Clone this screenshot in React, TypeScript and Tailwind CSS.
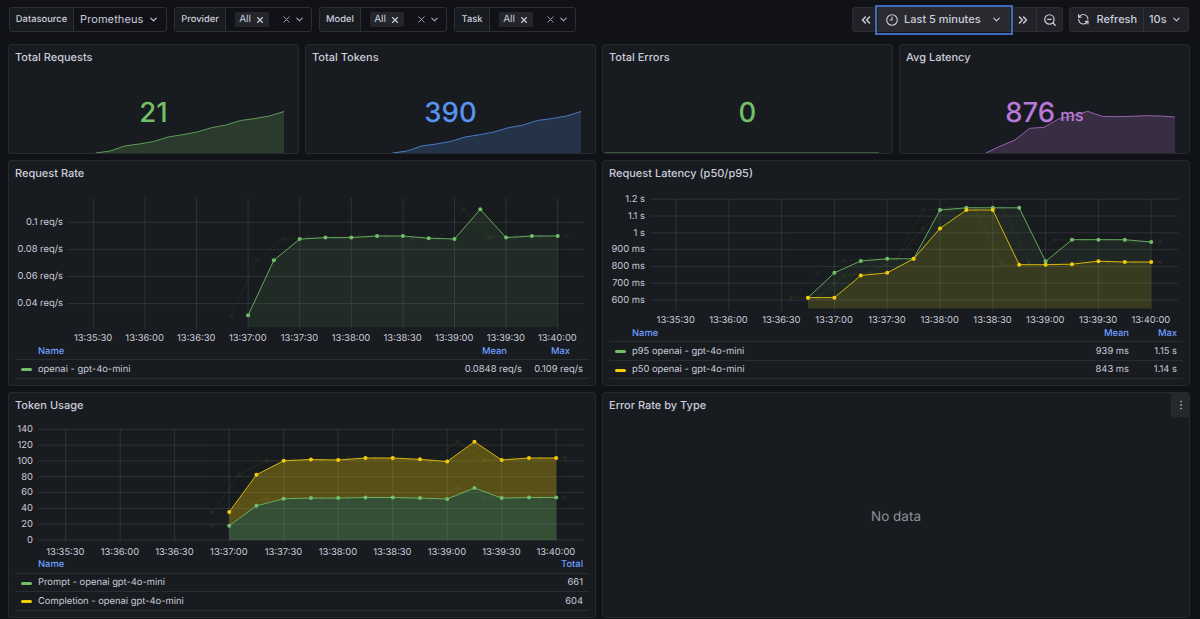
import { ChevronDown, ChevronsLeft, ChevronsRight, MoreVertical, RefreshCcw, X, ZoomOut } from "lucide-react";
import type { ReactNode } from "react";

const GREEN = "#73bf69";
const YELLOW = "#f2cc0c";

const TIMES = ["13:35:30", "13:36:00", "13:36:30", "13:37:00", "13:37:30", "13:38:00", "13:38:30", "13:39:00", "13:39:30", "13:40:00"];

type Series = { color: string; fill: number; values: number[]; };

type ChartProps = {
    height: number;
    left: number;
    firstTick: number;
    tickStep: number;
    bottom: number;
    labelY: number;
    // Two reference points of the value axis: [value, y]
    scale: [[number, number], [number, number]];
    ticks: { value: number; label: string }[];
    series: Series[];
    stacked?: boolean;
    top: number;
};

const TimeChart = ({ height, left, firstTick, tickStep, bottom, labelY, scale, ticks, series, stacked, top }: ChartProps) => {
    const [[v0, y0], [v1, y1]] = scale;
    const y = (value: number) => y0 + ((value - v0) / (v1 - v0)) * (y1 - y0);
    const lastX = firstTick + tickStep * 9;
    const toPoints = (values: number[]) => values.map((v, i) => [lastX - (values.length - 1 - i) * (tickStep / 2), y(v)]);
    const join = (points: number[][]) => points.map(([px, py]) => `${px.toFixed(1)},${py.toFixed(1)}`).join(" ");

    return (
        <svg width="586" height={height} viewBox={`0 0 586 ${height}`} className="block shrink-0 overflow-visible font-[Inter,sans-serif] text-[9.4px]">
            {/* Grid */}
            <g stroke="#ccccdc" strokeOpacity="0.12">
                {ticks.map((t) => <line key={t.label} x1={left} x2="575" y1={y(t.value)} y2={y(t.value)} />)}
                {TIMES.map((t, i) => <line key={t} x1={firstTick + i * tickStep} x2={firstTick + i * tickStep} y1={top} y2={bottom + 2} />)}
            </g>

            {/* Axis labels */}
            <g fill="#ccccdc">
                {ticks.map((t) => <text key={t.label} x={left - 5} y={y(t.value) + 2.8} textAnchor="end">{t.label}</text>)}
                {TIMES.map((t, i) => <text key={t} x={firstTick + i * tickStep - 0.3} y={labelY} textAnchor="middle">{t}</text>)}
            </g>

            <g opacity="0.07">
                {series.map((s) => {
                    const shifted = toPoints(s.values).map(([px, py]) => [px - 17, py]);
                    const trail = [...shifted, [lastX + 9, shifted[shifted.length - 1][1]]];
                    return (
                        <g key={s.color}>
                            <polyline points={join(trail)} fill="none" stroke={s.color} />
                            {trail.map(([px, py]) => <circle key={px} cx={px} cy={py} r="2" fill={s.color} />)}
                        </g>
                    );
                })}
            </g>

            {/* Areas */}
            {series.map((s, i) => {
                const points = toPoints(s.values);
                const below = stacked && series[i + 1]
                    ? toPoints(series[i + 1].values).reverse()
                    : [[lastX, bottom], [points[0][0], bottom]];
                return <polygon key={s.color} points={join([...points, ...below])} fill={s.color} fillOpacity={s.fill} />;
            })}

            {/* Lines and points */}
            {series.map((s) => {
                const points = toPoints(s.values);
                return (
                    <g key={s.color}>
                        <polyline points={join(points)} fill="none" stroke={s.color} strokeOpacity="0.85" />
                        {points.map(([px, py]) => <circle key={px} cx={px} cy={py} r="2" fill={s.color} />)}
                    </g>
                );
            })}
        </svg>
    );
};

const Panel = ({ title, className = "", children }: { title: string; className?: string; children?: ReactNode }) => (
    <section className={`relative flex flex-col overflow-hidden rounded-[3px] border border-[#26292e] bg-[#181b1f] ${className}`}>
        <h2 className="h-[29px] shrink-0 pl-1.5 text-[11px] leading-[24px] font-medium text-[#ccccdc]">{title}</h2>
        {children}
    </section>
);

type StatProps = { title: string; value: string; unit?: string; color: string; textClass: string; points: string; end: number };

const StatPanel = ({ title, value, unit, color, textClass, points, end }: StatProps) => (
    <Panel title={title} className="h-[110px]">
        <div className={`flex h-[77px] items-center justify-center text-[27.5px] leading-none font-medium ${textClass}`}>
            <span>{value}</span>
            {unit && <span className="mt-[6px] ml-[5px] text-[16.5px]">{unit}</span>}
        </div>
        {/* Sparkline */}
        <svg width="290" height="44" viewBox="0 0 290 44" className="absolute -bottom-px left-0">
            <polygon points={`${points} ${end},44 ${points.split(",")[0]},44`} fill={color} fillOpacity="0.2" />
            <polyline points={points} fill="none" stroke={color} strokeOpacity="0.75" />
        </svg>
    </Panel>
);

type LegendProps = { columns: { label: string; width: string; inset?: string }[]; rows: { color: string; name: string; values: string[] }[] };

const Legend = ({ columns, rows }: LegendProps) => (
    <div className="ml-1.5 w-[574px] text-[9.4px] leading-none text-[#ccccdc]">
        <div className="flex h-[18.5px] items-center border-b border-[#292c31] pt-[2px] pr-[6px] font-medium text-[#6e9fff]">
            <span className="flex-1 pl-[23px]">Name</span>
            {columns.map((c) => <span key={c.label} className={`text-right ${c.width} ${c.inset ?? ""}`}>{c.label}</span>)}
        </div>
        {rows.map((row) => (
            <div key={row.name} className="flex h-[18.5px] items-center border-b border-[#292c31] pt-[1.5px] pr-[6px]">
                <span className="ml-1.5 h-[3px] w-[11px] rounded-full" style={{ backgroundColor: row.color }} />
                <span className="flex-1 pl-1.5">{row.name}</span>
                {row.values.map((v, i) => <span key={v} className={`text-right whitespace-nowrap ${columns[i].width}`}>{v}</span>)}
            </div>
        ))}
    </div>
);

const Variable = ({ label, className, labelClass }: { label: string; className: string; labelClass: string }) => (
    <div className={`flex h-[25px] items-center rounded-[3px] border border-[#2c2e34] ${className}`}>
        <span className={`flex h-full items-center justify-center border-r border-[#2c2e34] bg-[#181b1f] pt-px text-[9.4px] font-medium ${labelClass}`}>{label}</span>
        <span className="ml-[9px] flex h-[15px] w-[34px] items-center justify-center gap-[4px] rounded-[2px] bg-[#24262c] text-[10px]">
            <span>All</span> <X size={10} strokeWidth={2.6} />
        </span>
        <span className="mr-1.5 ml-auto flex items-center gap-[2px] text-[#a5a6b2]">
            <X size={11} strokeWidth={2} />
            <ChevronDown size={11} strokeWidth={2.4} />
        </span>
    </div>
);

const Toolbar = () => (
    <header className="flex h-[37px] pt-[7px] pl-[9px] text-[11px] text-[#ccccdc]">
        <div className="flex h-[25px] w-[158px] items-center rounded-[3px] border border-[#2c2e34]">
            <span className="flex h-full w-[64px] items-center justify-center border-r border-[#2c2e34] bg-[#181b1f] pt-px text-[9.4px] font-medium">Datasource</span>
            <span className="flex-1 pl-1.5 tracking-[0.1px]">Prometheus</span>
            <ChevronDown size={11} strokeWidth={2.4} className="mr-[7px]" />
        </div>
        <Variable label="Provider" className="ml-[7px] w-[138px]" labelClass="w-[51px]" />
        <Variable label="Model" className="ml-[7px] w-[128px]" labelClass="w-[41px]" />
        <Variable label="Task" className="ml-[7px] w-[122px]" labelClass="w-[35px]" />

        {/* Time range */}
        <div className="mr-1.5 ml-auto flex h-[25px] w-[211px] items-center rounded-[3px] border border-[#2b2d32] bg-[#202227] font-medium">
            <span className="flex w-[25px] justify-center"><ChevronsLeft size={14} strokeWidth={2.6} /></span>
            <button className="flex h-[24px] w-[132px] items-center bg-[#2a2b30] pl-2 outline-2 outline-offset-1 outline-[#3f6cba]">
                {/* Clock pointing at nine */}
                <svg width="12" height="12" viewBox="0 0 12 12" fill="none" stroke="currentColor" strokeWidth="1.1" strokeLinecap="round">
                    <circle cx="6" cy="6" r="5.3" />
                    <path d="M6 3v3H4" />
                </svg>
                <span className="pl-1.5">Last 5 minutes</span>
                <ChevronDown size={11} strokeWidth={2.4} className="mr-[8px] ml-auto" />
            </button>
            <span className="flex h-full w-[27px] items-center justify-center border-r border-[#303238]"><ChevronsRight size={14} strokeWidth={2.6} /></span>
            <span className="flex flex-1 justify-center"><ZoomOut size={14} strokeWidth={2.1} /></span>
        </div>

        {/* Refresh */}
        <div className="mr-[11px] flex h-[25px] w-[120px] items-center rounded-[3px] border border-[#2b2d32] bg-[#202227] font-medium">
            <span className="flex h-full w-[74px] items-center gap-[7px] border-r border-[#303238] pl-[7px]">
                <RefreshCcw size={12.5} strokeWidth={2.1} />Refresh
            </span>
            <span className="pl-[5px]">10s</span>
            <ChevronDown size={11} strokeWidth={2.4} className="ml-[4px]" />
        </div>
    </header>
);

const RISING = "86.5,43 101,41 115.5,36 130,34 144.5,31.5 159,27 173.5,24.7 188,22 202.5,17.7 217,15 231.5,10.5 246,8.5 260.5,6 275,1.5";

export default function App() {
    return (
        <div className="h-[619px] w-[1200px] overflow-hidden bg-[#111217] font-[Inter,sans-serif] text-[#ccccdc] [text-rendering:geometricPrecision]">
            <Toolbar />
            <main className="flex flex-col gap-1.5 pt-[7px] pr-[10px] pl-[8px]">
                <div className="grid grid-cols-4 gap-1.5">
                    <StatPanel title="Total Requests" value="21" color={GREEN} textClass="text-[#73bf69]" points={RISING} end={275} />
                    <StatPanel title="Total Tokens" value="390" color="#5794f2" textClass="text-[#5794f2]" points={RISING} end={275} />
                    <StatPanel title="Total Errors" value="0" color={GREEN} textClass="text-[#73bf69]" points="2,43 276,43" end={276} />
                    <StatPanel
                        title="Avg Latency" value="876" unit="ms" color="#b877d9" textClass="text-[#b877d9]" end={275}
                        points="86,43 100.5,36 115,30 129.5,18.3 144,17.3 158.5,9 173,5.7 187.5,1.3 202,6.3 216.5,6.7 231,6.3 245.5,5.7 260,6 275,7"
                    />
                </div>

                <div className="grid grid-cols-2 gap-1.5">
                    <Panel title="Request Rate" className="h-[226px]">
                        <TimeChart
                            height={151.5} left={59} firstTick={84.3} tickStep={51.6} top={8} bottom={137} labelY={151}
                            scale={[[0.1, 32.3], [0.04, 113.6]]}
                            ticks={[
                                { value: 0.1, label: "0.1 req/s" },
                                { value: 0.08, label: "0.08 req/s" },
                                { value: 0.06, label: "0.06 req/s" },
                                { value: 0.04, label: "0.04 req/s" },
                            ]}
                            series={[{ color: GREEN, fill: 0.1, values: [0.0314, 0.072, 0.0876, 0.0887, 0.0887, 0.0899, 0.0899, 0.0883, 0.0877, 0.1096, 0.0887, 0.0899, 0.0899] }]}
                        />
                        <Legend
                            columns={[{ label: "Mean", width: "w-[61px]", inset: "pr-[15px]" }, { label: "Max", width: "w-[61px]", inset: "pr-[13px]" }]}
                            rows={[{ color: GREEN, name: "openai - gpt-4o-mini", values: ["0.0848 req/s", "0.109 req/s"] }]}
                        />
                    </Panel>
                    <Panel title="Request Latency (p50/p95)" className="h-[226px]">
                        <TimeChart
                            height={133.5} left={47} firstTick={73} tickStep={52.8} top={9} bottom={118.5} labelY={133}
                            scale={[[1200, 9.2], [600, 110]]}
                            ticks={[
                                { value: 1200, label: "1.2 s" },
                                { value: 1100, label: "1.1 s" },
                                { value: 1000, label: "1 s" },
                                { value: 900, label: "900 ms" },
                                { value: 800, label: "800 ms" },
                                { value: 700, label: "700 ms" },
                                { value: 600, label: "600 ms" },
                            ]}
                            series={[
                                { color: GREEN, fill: 0.08, values: [614, 762, 832, 845, 845, 1136, 1149, 1149, 1149, 830, 959, 959, 959, 945] },
                                { color: YELLOW, fill: 0.12, values: [614, 614, 746, 762, 845, 1026, 1136, 1136, 810, 810, 813, 831, 826, 826] },
                            ]}
                        />
                        <Legend
                            columns={[{ label: "Mean", width: "w-[70px]" }, { label: "Max", width: "w-[48px]" }]}
                            rows={[
                                { color: GREEN, name: "p95 openai - gpt-4o-mini", values: ["939 ms", "1.15 s"] },
                                { color: YELLOW, name: "p50 openai - gpt-4o-mini", values: ["843 ms", "1.14 s"] },
                            ]}
                        />
                    </Panel>
                </div>

                <div className="grid grid-cols-2 gap-1.5">
                    <Panel title="Token Usage" className="h-[226px]">
                        <TimeChart
                            height={133} left={29} firstTick={56.7} tickStep={54.5} top={7} bottom={118} labelY={132.5}
                            scale={[[140, 7.3], [0, 118]]}
                            ticks={[140, 120, 100, 80, 60, 40, 20, 0].map((value) => ({ value, label: String(value) }))}
                            stacked
                            series={[
                                { color: YELLOW, fill: 0.3, values: [35.4, 82.6, 100.2, 101.8, 101.2, 103.7, 103.7, 102, 99.3, 124.3, 101.2, 103.7, 103.7] },
                                { color: GREEN, fill: 0.32, values: [18.1, 43.3, 52.1, 53, 53, 53.7, 53.7, 53, 51.9, 65.8, 53, 53.7, 53.7] },
                            ]}
                        />
                        <Legend
                            columns={[{ label: "Total", width: "w-[70px]" }]}
                            rows={[
                                { color: GREEN, name: "Prompt - openai gpt-4o-mini", values: ["661"] },
                                { color: YELLOW, name: "Completion - openai gpt-4o-mini", values: ["604"] },
                            ]}
                        />
                    </Panel>
                    <Panel title="Error Rate by Type" className="h-[226px]">
                        <div className="flex h-[191px] items-center justify-center text-[13.5px] text-[#8e8f9a]">No data</div>
                        <button className="absolute -top-px -right-px flex h-[25px] w-[19px] items-center justify-center rounded-[3px] bg-[#26282d] text-[#a5a6b2]">
                            <MoreVertical size={12} />
                        </button>
                    </Panel>
                </div>
            </main>
        </div>
    );
}
